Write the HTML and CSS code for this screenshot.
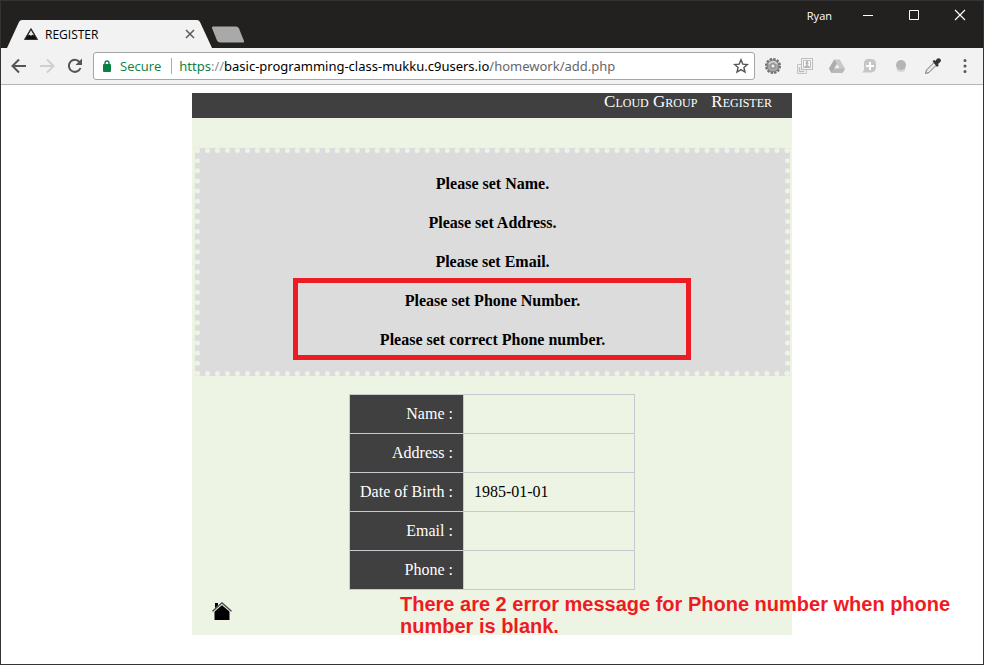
FILE: index.html
```html
<!DOCTYPE html>
<html lang="en">
<head>
<meta charset="utf-8">
<title>REGISTER</title>
<link rel="stylesheet" href="styles.css">
</head>
<body>
<div class="window">
  <header class="tabstrip">
    <div class="tab">
      <svg class="tab-shape" viewBox="0 0 206 28" preserveAspectRatio="none" aria-hidden="true"><path d="M0 28 L12 2 Q13 0 15 0 H190 Q192 0 193 2 L205 28Z" fill="#f2f2f2"/></svg>
      <svg class="favicon" viewBox="0 0 14 12" aria-hidden="true"><path d="M7 .5L13.500 11.500H.5Z" fill="#111" stroke="#333"/><path d="M7 2.200L4 7.500l1.500-.8L7 7.700l1.500-1 1.500.8Z" fill="#e6e6e6"/></svg>
      <span class="tab-title">REGISTER</span>
      <button class="plain tab-close" aria-label="Close tab"><svg viewBox="0 0 10 10" width="10" height="10"><path d="M1 1l8 8M9 1l-8 8" stroke="#5a5a5a" stroke-width="1.5"/></svg></button>
    </div>
    <button class="plain new-tab" aria-label="New tab"><svg viewBox="0 0 34 17" width="34" height="17"><path d="M2 .5H25Q27 .5 28 2.500L33 15Q33.500 16.500 32 16.500H9Q7 16.500 6 14.500L1 2Q.5.5 2 .5Z" fill="#a9a9a9"/></svg></button>
    <div class="caption">
      <span class="user">Ryan</span>
      <button class="plain" aria-label="Minimize"><svg viewBox="0 0 12 12" width="12" height="12"><path d="M1 6.500h10" stroke="#fff"/></svg></button>
      <button class="plain" aria-label="Maximize"><svg viewBox="0 0 12 12" width="12" height="12"><path d="M1.500 1.500h9v9h-9z" stroke="#fff" fill="none"/></svg></button>
      <button class="plain" aria-label="Close"><svg viewBox="0 0 12 12" width="12" height="12"><path d="M1 1l10 10M11 1L1 11" stroke="#fff" stroke-width="1.200"/></svg></button>
    </div>
  </header>
  <nav class="toolbar" aria-label="Browser">
    <div class="history">
      <button class="plain" aria-label="Back"><svg viewBox="0 0 16 16" width="16" height="16"><path d="M15 8H2M8 1.500L1.500 8 8 14.500" fill="none" stroke="#555" stroke-width="2"/></svg></button>
      <button class="plain" aria-label="Forward"><svg viewBox="0 0 16 16" width="16" height="16"><path d="M1 8h13M8 1.500L14.500 8 8 14.500" fill="none" stroke="#cfcfcf" stroke-width="2"/></svg></button>
      <button class="plain" aria-label="Reload"><svg viewBox="0 0 16 16" width="16" height="16"><path d="M13.500 10A6 6 0 1 1 12.500 4" fill="none" stroke="#555" stroke-width="2"/><path d="M15 .5V7H8.500Z" fill="#555"/></svg></button>
    </div>
    <div class="omnibox">
      <svg class="lock" viewBox="0 0 8 12" width="8" height="12" aria-hidden="true"><path d="M2 5V3Q2 1 4 1T6 3v2" fill="none" stroke="#0b8043" stroke-width="1.400"/><rect y="4" width="8" height="8" rx="1" fill="#0b8043"/></svg>
      <span class="secure">Secure</span>
      <div class="url" role="textbox" aria-label="Address"><span class="scheme">https</span><span class="dim">://</span>basic-programming-class-mukku.c9users.io<span class="path">/homework/add.php</span></div>
      <button class="plain" aria-label="Bookmark"><svg viewBox="0 0 16 16" width="16" height="16"><path d="M8 1.800l1.800 4.300 4.600.4-3.500 3 1.100 4.500-4-2.400L4 14l1.100-4.500-3.500-3 4.600-.4Z" fill="none" stroke="#555" stroke-width="1.400"/></svg></button>
    </div>
    <div class="extensions">
      <button class="plain" aria-label="Settings extension"><svg viewBox="0 0 16 16" width="16" height="16"><circle cx="8" cy="8" r="7" fill="none" stroke="#6a6a6a" stroke-width="2" stroke-dasharray="2.400 1.265"/><circle cx="8" cy="8" r="4.300" fill="none" stroke="#a6a6a6" stroke-width="4"/><circle cx="8" cy="8" r="6" fill="none" stroke="#777"/><path d="M4 6Q8 1 12 6" fill="none" stroke="#d4d4d4" stroke-width="1.500"/><circle cx="8" cy="8" r="2.200" fill="#f2f2f2" stroke="#777"/></svg></button>
      <button class="plain" aria-label="Cards extension"><svg viewBox="0 0 16 16" width="16" height="16"><path d="M.5 6.500h9v9h-9z" fill="#f4f4f4" stroke="#c4c4c4"/><path d="M2.500 9v4.500h5" fill="none" stroke="#bdbdbd" stroke-width="1.500"/><path d="M4.500.5h11v11h-11z" fill="#f4f4f4" stroke="#bdbdbd"/><path d="M6.500 2.500h7v7h-7z" fill="#fff" stroke="#bdbdbd"/><ellipse cx="10" cy="5" rx="1.500" ry="2" fill="#b4b4b4"/><path d="M7 9.500q.5-2.500 3-2.500t3 2.500Z" fill="#b4b4b4"/></svg></button>
      <button class="plain" aria-label="Drive extension"><svg viewBox="0 0 16 16" width="16" height="16"><path d="M5.300 1.500h5.400L16 10.500 13.500 15h-11L0 10.500Z" fill="#c9c9c9"/><path d="M5.300 1.500L8 6 2.500 15 0 10.500Z" fill="#adadad"/><path d="M8 6l2.500 4.500H5.300Z" fill="#f2f2f2"/><path d="M5.300 10.500H16L13.500 15h-11Z" fill="#b9b9b9"/></svg></button>
      <button class="plain" aria-label="Add comment extension"><svg viewBox="0 0 16 16" width="16" height="16"><path d="M1 14.500Q3 13 3 11V5Q3.500 1 7 1h4q4 .5 4 5v3q0 4.500-4.500 5.500Z" fill="#c6c6c6"/><path d="M9 4v8M5 8h8" stroke="#fff" stroke-width="2"/></svg></button>
      <button class="plain" aria-label="Recorder extension"><svg viewBox="0 0 16 16" width="16" height="16"><ellipse cx="8" cy="11" rx="4.500" ry="3" fill="#d6d6d6"/><circle cx="8" cy="7" r="5" fill="#b5b5b5"/></svg></button>
      <button class="plain" aria-label="Color picker"><svg viewBox="0 0 16 16" width="16" height="16"><path d="M9 4.500L1.500 12 .5 15.500 4 14.500 11.500 7Z" fill="#e8e8e8" stroke="#777"/><path d="M7.500 3l1.800-1 1 1L12 .7Q14-.5 15.300 1T15.300 4L13 6l.7 1.500L12 9Z" fill="#333"/></svg></button>
      <button class="plain" aria-label="Menu"><svg viewBox="0 0 16 16" width="16" height="16"><path d="M8 2.500v.01M8 8v.01M8 13.500v.01" stroke="#555" stroke-width="3" stroke-linecap="round"/></svg></button>
    </div>
  </nav>
  <main class="viewport">
    <div class="page">
      <nav class="menu" aria-label="Site"><a href="#">Cloud Group</a><a href="#">Register</a></nav>
      <section class="errors">
        <h4>Please set Name.</h4>
        <h4>Please set Address.</h4>
        <h4>Please set Email.</h4>
        <div class="marked">
          <h4>Please set Phone Number.</h4>
          <h4>Please set correct Phone number.</h4>
        </div>
      </section>
      <table class="details">
        <tr><th scope="row">Name :</th><td></td></tr>
        <tr><th scope="row">Address :</th><td></td></tr>
        <tr><th scope="row">Date of Birth :</th><td>1985-01-01</td></tr>
        <tr><th scope="row">Email :</th><td></td></tr>
        <tr><th scope="row">Phone :</th><td></td></tr>
      </table>
      <footer class="footer">
        <a href="#" aria-label="Home"><svg viewBox="0 0 20 18" width="20" height="18"><path d="M3 1h3v6H3zM10 2l7.500 6.500V18h-15V8.500Z" fill="#000"/><path d="M.7 9.700L10 1.500l9.300 8.200" fill="none" stroke="#dfe5d6" stroke-width="2.400"/><path d="M.5 9.300L10 .8l9.500 8.500" fill="none" stroke="#444" stroke-width="1.200"/></svg></a>
      </footer>
      <p class="note">There are 2 error message for Phone number when phone number is blank.</p>
    </div>
  </main>
</div>
</body>
</html>
```
FILE: styles.css
```css
* { box-sizing: border-box; }

body {
  margin: 0;
  background: #fff;
  font-family: "Liberation Serif", serif;
  font-size: 16px;
  color: #000;
}

.window {
  display: flex;
  flex-direction: column;
  min-height: 100vh;
  border: 1px solid #333;
}

.plain {
  display: flex;
  align-items: center;
  justify-content: center;
  padding: 0;
  border: 0;
  background: none;
}

svg { display: block; }

/* Browser chrome */
.tabstrip {
  display: flex;
  height: 47px;
  background: #22211f;
  font-family: "Open Sans", sans-serif;
  font-size: 12px;
}

.tab {
  position: relative;
  display: flex;
  align-items: center;
  align-self: flex-end;
  gap: 7px;
  width: 206px;
  height: 28px;
  margin-left: 6px;
  padding: 0 18px 0 17px;
}

.tab-shape {
  position: absolute;
  inset: 0;
  width: 100%;
  height: 100%;
}

.favicon {
  position: relative;
  width: 14px;
  height: 12px;
}

.tab-title {
  position: relative;
  flex: 1;
}

.tab-close { position: relative; }

.new-tab {
  align-self: flex-end;
  height: 27px;
  margin-left: -2px;
}

.caption {
  display: flex;
  align-items: center;
  gap: 34px;
  height: 28px;
  margin-left: auto;
  padding-right: 17px;
  color: #fff;
  font-size: 11px;
}

.user { margin-right: -4px; }

.toolbar {
  display: flex;
  align-items: center;
  gap: 10px;
  height: 37px;
  padding: 0 10px;
  background: #f2f2f2;
  border-bottom: 1px solid #b6b4b6;
}

.history,
.extensions {
  display: flex;
  align-items: center;
}

.history { gap: 12px; }

.extensions { gap: 16px; }

.omnibox {
  display: flex;
  flex: 1;
  align-items: center;
  height: 28px;
  padding: 0 5px 0 9px;
  border: 1px solid #a6a6a6;
  border-radius: 3px;
  background: #fff;
  font-family: "Noto Sans", sans-serif;
  font-size: 13px;
}

.secure {
  margin-left: 9px;
  padding-right: 10px;
  border-right: 1px solid #a9a9a9;
  color: #0b8043;
  font-family: "Open Sans", sans-serif;
  line-height: 16px;
}

.url {
  flex: 1;
  margin-left: 7px;
  white-space: nowrap;
}

.scheme { color: #0b8043; }

.dim { color: #909090; }

.path { color: #666; }

/* Site content */
.viewport {
  flex: 1;
  padding: 8px;
}

.page {
  position: relative;
  width: 100%;
  max-width: 600px;
  margin: 0 auto;
  background: #edf4e3;
}

.menu {
  display: flex;
  justify-content: flex-end;
  gap: 14px;
  height: 25px;
  padding: 0 20px;
  background: #404040;
  font-size: 17px;
  font-variant: small-caps;
  line-height: 18px;
}

.menu a {
  color: #fff;
  text-decoration: none;
}

.errors {
  display: grid;
  gap: 21px;
  margin: 30px 2px 18px 3px;
  padding: 22px 0;
  border: 5px dotted #edf4e3;
  background: #dcdcdc;
  text-align: center;
}

.errors h4 {
  margin: 0;
  font-size: 16px;
  line-height: 18px;
}

.marked {
  position: relative;
  display: grid;
  gap: 21px;
}

.marked::after {
  content: "";
  position: absolute;
  inset: -14px 94px -11px 93px;
  border: 5px solid #ed1c24;
}

.details {
  margin: 0 auto;
  border-collapse: collapse;
}

.details th,
.details td {
  height: 39px;
  padding: 0 10px;
  border: 1px solid #c6c9cf;
  line-height: 18px;
}

.details th {
  background: #404040;
  color: #fff;
  font-weight: normal;
  text-align: right;
}

.details td { width: 171px; }

.footer { padding: 12px 20px 15px; }

.footer a { display: block; width: 20px; }

.note {
  position: absolute;
  top: 500px;
  left: 208px;
  width: 560px;
  margin: 0;
  color: #ed1c24;
  font: bold 20px/22px "Liberation Sans", sans-serif;
}
```
